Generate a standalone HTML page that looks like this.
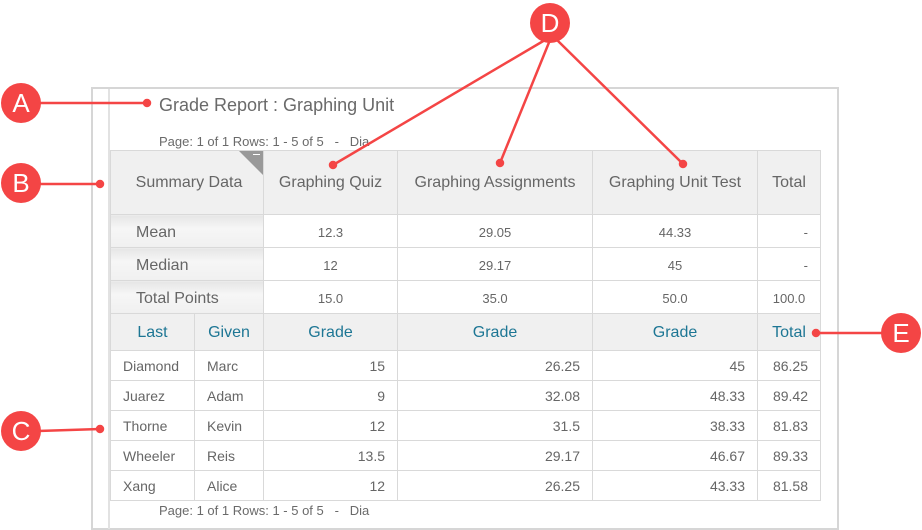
<!DOCTYPE html>
<html><head><meta charset="utf-8"><style>
*{margin:0;padding:0;box-sizing:border-box}
body{width:922px;height:530px;background:#fff;position:relative;overflow:hidden;font-family:"Liberation Sans",sans-serif;color:#666}
.abs{position:absolute}
table{position:absolute;left:110px;top:150px;border-collapse:collapse;table-layout:fixed;width:710px}
td{border:1px solid #d9d9d9;padding:0;overflow:hidden;white-space:nowrap}
.h td{background:#f0f0f0;font-size:16px;text-align:center;height:64px}
.s td{font-size:13px;text-align:center;height:33px;padding-top:2px}
.s td.l{background:linear-gradient(#e6e6e6,#f6f6f6 40%,#f0f0f0);text-align:left;padding-left:25px;font-size:16px;padding-top:3px}
.s td.r{text-align:right;padding-right:12px}
.h2 td{background:#f0f0f0;color:#1d7694;font-size:16px;text-align:center;height:37px;padding-top:2px}
.d td{font-size:14px;height:30px}
.d td.n{text-align:right;padding-right:12px}
.d td.t{text-align:left;padding-left:12px}
.circ{position:absolute;width:40px;height:40px;border-radius:50%;background:#f44545;color:#fff;font-size:26px;text-align:center;line-height:40px}
</style></head><body>
<div class="abs" style="left:91px;top:87px;width:748px;height:443px;border:2px solid #d6d6d6"></div>
<div class="abs" style="left:108px;top:89px;width:2px;height:440px;background:#e2e2e2"></div>
<div class="abs" style="left:159px;top:95px;font-size:18px;color:#6a6a6a">Grade Report : Graphing Unit</div>
<div class="abs" style="left:159px;top:134px;font-size:13px;color:#6a6a6a;white-space:pre">Page: 1 of 1 Rows: 1 - 5 of 5   -   Dia</div>
<table>
<colgroup><col style="width:84px"><col style="width:69px"><col style="width:134px"><col style="width:195px"><col style="width:165px"><col style="width:63px"></colgroup>
<tr class="h"><td colspan="2" style="position:relative;padding-left:4px">Summary Data<div class="abs" style="right:0;top:0;width:0;height:0;border-left:24px solid transparent;border-top:24px solid #999"></div><div class="abs" style="right:3px;top:3px;width:7px;height:1px;background:#fff"></div></td><td>Graphing Quiz</td><td>Graphing Assignments</td><td>Graphing Unit Test</td><td>Total</td></tr>
<tr class="s"><td class="l" colspan="2">Mean</td><td>12.3</td><td>29.05</td><td>44.33</td><td class="r">-</td></tr>
<tr class="s"><td class="l" colspan="2">Median</td><td>12</td><td>29.17</td><td>45</td><td class="r">-</td></tr>
<tr class="s"><td class="l" colspan="2">Total Points</td><td>15.0</td><td>35.0</td><td>50.0</td><td>100.0</td></tr>
<tr class="h2"><td>Last</td><td>Given</td><td>Grade</td><td>Grade</td><td>Grade</td><td>Total</td></tr>
<tr class="d"><td class="t">Diamond</td><td class="t">Marc</td><td class="n">15</td><td class="n">26.25</td><td class="n">45</td><td class="n">86.25</td></tr>
<tr class="d"><td class="t">Juarez</td><td class="t">Adam</td><td class="n">9</td><td class="n">32.08</td><td class="n">48.33</td><td class="n">89.42</td></tr>
<tr class="d"><td class="t">Thorne</td><td class="t">Kevin</td><td class="n">12</td><td class="n">31.5</td><td class="n">38.33</td><td class="n">81.83</td></tr>
<tr class="d"><td class="t">Wheeler</td><td class="t">Reis</td><td class="n">13.5</td><td class="n">29.17</td><td class="n">46.67</td><td class="n">89.33</td></tr>
<tr class="d"><td class="t">Xang</td><td class="t">Alice</td><td class="n">12</td><td class="n">26.25</td><td class="n">43.33</td><td class="n">81.58</td></tr>
</table>
<div class="abs" style="left:159px;top:503px;font-size:13px;color:#6a6a6a;white-space:pre">Page: 1 of 1 Rows: 1 - 5 of 5   -   Dia</div>
<svg class="abs" style="left:0;top:0" width="922" height="530">
<g stroke="#f44545" stroke-width="2.5" fill="#f44545">
<line x1="38" y1="103" x2="147" y2="103"/><circle cx="147" cy="103" r="3"/>
<line x1="38" y1="184" x2="100" y2="184"/><circle cx="100" cy="184" r="3"/>
<line x1="38" y1="431" x2="100" y2="429"/><circle cx="100" cy="429" r="3"/>
<line x1="545" y1="40" x2="333" y2="165"/><circle cx="333" cy="165" r="3"/>
<line x1="550" y1="40" x2="500" y2="163"/><circle cx="500" cy="163" r="3"/>
<line x1="557" y1="40" x2="683" y2="164"/><circle cx="683" cy="164" r="3"/>
<line x1="883" y1="333" x2="816" y2="333"/><circle cx="816" cy="333" r="3"/>
</g></svg>
<div class="circ" style="left:1px;top:83px">A</div>
<div class="circ" style="left:1px;top:163px">B</div>
<div class="circ" style="left:1px;top:411px">C</div>
<div class="circ" style="left:530px;top:3px">D</div>
<div class="circ" style="left:881px;top:313px">E</div>
</body></html>
